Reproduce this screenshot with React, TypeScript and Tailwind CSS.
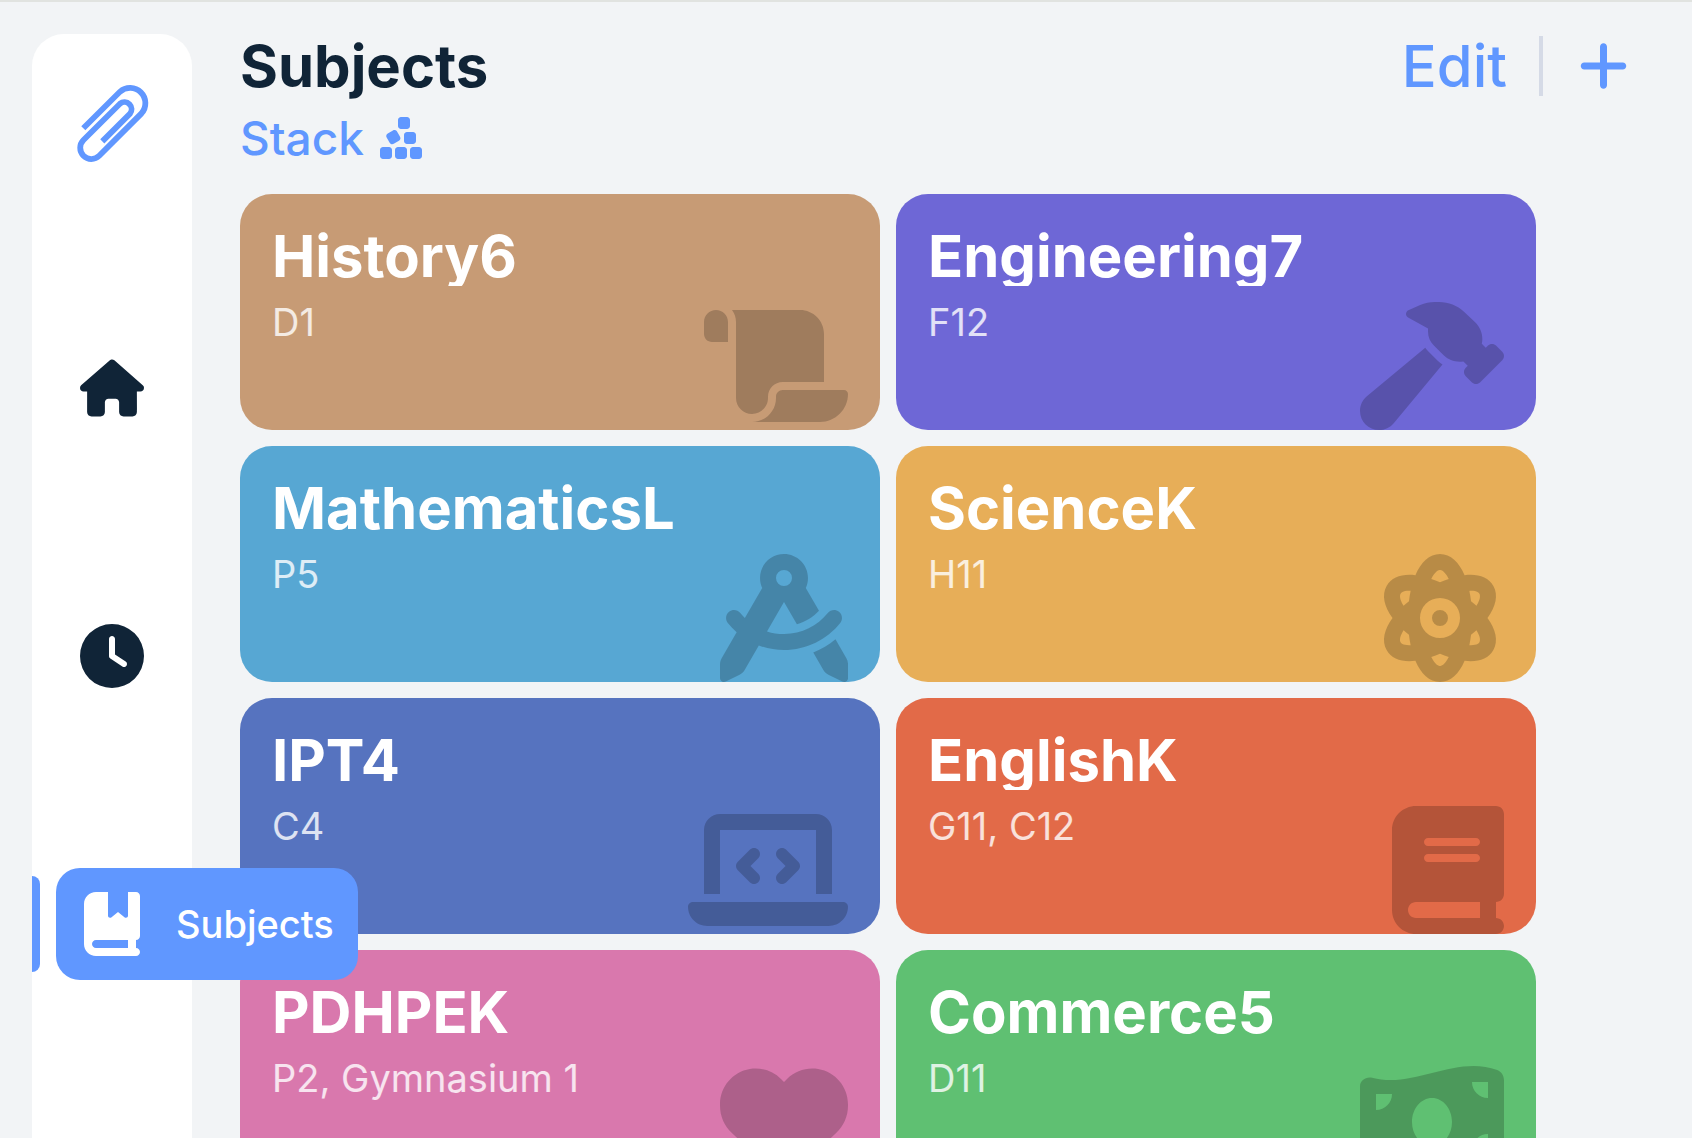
import type { IconType } from 'react-icons'
import {
  FaAtom,
  FaBook,
  FaBookBookmark,
  FaClock,
  FaCompassDrafting,
  FaCubesStacked,
  FaHammer,
  FaHeart,
  FaHouse,
  FaLaptopCode,
  FaMoneyBillWave,
  FaPlus,
  FaScroll,
} from 'react-icons/fa6'

interface Subject {
  name: string
  rooms: string
  color: string
  icon: IconType
  iconWidth: string
}

const subjects: Subject[] = [
  { name: 'History6', rooms: 'D1', color: 'bg-[#c79b75]', icon: FaScroll, iconWidth: 'w-36' },
  { name: 'Engineering7', rooms: 'F12', color: 'bg-[#6e67d6]', icon: FaHammer, iconWidth: 'w-36' },
  { name: 'MathematicsL', rooms: 'P5', color: 'bg-[#57a7d3]', icon: FaCompassDrafting, iconWidth: 'w-32' },
  { name: 'ScienceK', rooms: 'H11', color: 'bg-[#e7ae58]', icon: FaAtom, iconWidth: 'w-32' },
  { name: 'IPT4', rooms: 'C4', color: 'bg-[#5673bf]', icon: FaLaptopCode, iconWidth: 'w-40' },
  { name: 'EnglishK', rooms: 'G11, C12', color: 'bg-[#e26a48]', icon: FaBook, iconWidth: 'w-28' },
  { name: 'PDHPEK', rooms: 'P2, Gymnasium 1', color: 'bg-[#d978ad]', icon: FaHeart, iconWidth: 'w-32' },
  { name: 'Commerce5', rooms: 'D11', color: 'bg-[#5fc072]', icon: FaMoneyBillWave, iconWidth: 'w-36' },
]

function Logo() {
  return (
    <svg viewBox="-1 0 74 80" className="w-[74px] h-20" fill="none" stroke="currentColor" strokeWidth="5.8">
      <path d="M7.3 44.3 L43.9 7.8 A15.3 15.3 0 0 1 65.5 29.4 L23.2 71.8 A11.1 11.1 0 0 1 7.5 56 L43.9 19.8 A7.1 7.1 0 0 1 53.9 29.8 L26.3 57.4" />
    </svg>
  )
}

function Sidebar() {
  return (
    <aside className="relative z-10 w-40 shrink-0 bg-white rounded-[32px] py-8 flex flex-col">
      <a href="#" aria-label="Home page" className="h-[116px] mb-[150px] flex items-center justify-center text-[#6097ff]">
        <Logo />
      </a>
      <nav className="flex flex-col gap-[156px]">
        <button aria-label="Home" className="h-28 ml-6 w-28 flex items-center justify-center">
          <FaHouse className="size-16" />
        </button>
        <button aria-label="Timetable" className="h-28 ml-6 w-28 flex items-center justify-center">
          <FaClock className="size-16" />
        </button>
        <div className="flex items-center gap-4">
          <span className="w-2 h-24 shrink-0 rounded-r-lg bg-[#6097ff]" />
          <button className="h-28 shrink-0 flex items-center pr-6 rounded-3xl bg-[#6097ff] text-white">
            <span className="w-28 mr-2 flex justify-center">
              <FaBookBookmark className="h-16 w-14" />
            </span>
            <span className="text-[38px] leading-[48px] font-medium">Subjects</span>
          </button>
        </div>
      </nav>
    </aside>
  )
}

function SubjectCard({ name, rooms, color, icon: Icon, iconWidth }: Subject) {
  return (
    <button className={`h-[236px] px-8 rounded-[32px] flex justify-between text-left text-white overflow-hidden ${color}`}>
      <div className="pt-8">
        <h2 className="text-[58px] leading-[60px] font-bold overflow-hidden">{name}</h2>
        <p className="mt-3 text-[38px] leading-[48px] text-white/80 whitespace-nowrap">{rooms}</p>
      </div>
      <Icon className={`h-32 shrink-0 self-end text-black/20 ${iconWidth}`} />
    </button>
  )
}

export default function App() {
  return (
    <div className="h-screen overflow-hidden bg-[#f2f4f6] border-t-2 border-[#e1e3e0] text-[#102437] font-['Inter',sans-serif]">
      <div className="flex gap-12 py-8 pl-8 pr-16">
        <Sidebar />
        <main className="flex-1 min-w-0">
          <header className="flex items-center justify-between">
            <h1 className="text-[58px] leading-[64px] font-bold">Subjects</h1>
            <div className="flex items-center text-[#6097ff]">
              <button className="text-[58px] leading-[64px] font-medium">Edit</button>
              <span className="w-1 h-[60px] ml-8 mr-9 bg-[#d5dae6]" />
              <button aria-label="Add subject">
                <FaPlus className="h-14 w-[49px]" />
              </button>
            </div>
          </header>
          <button className="mt-2 mb-6 flex items-center gap-4 text-[46px] leading-[64px] font-medium text-[#6097ff]">
            Stack
            <FaCubesStacked className="h-12 w-[42px]" />
          </button>
          <section className="grid grid-cols-2 gap-4 max-w-[1296px]">
            {subjects.map((subject) => (
              <SubjectCard key={subject.name} {...subject} />
            ))}
          </section>
        </main>
      </div>
    </div>
  )
}
